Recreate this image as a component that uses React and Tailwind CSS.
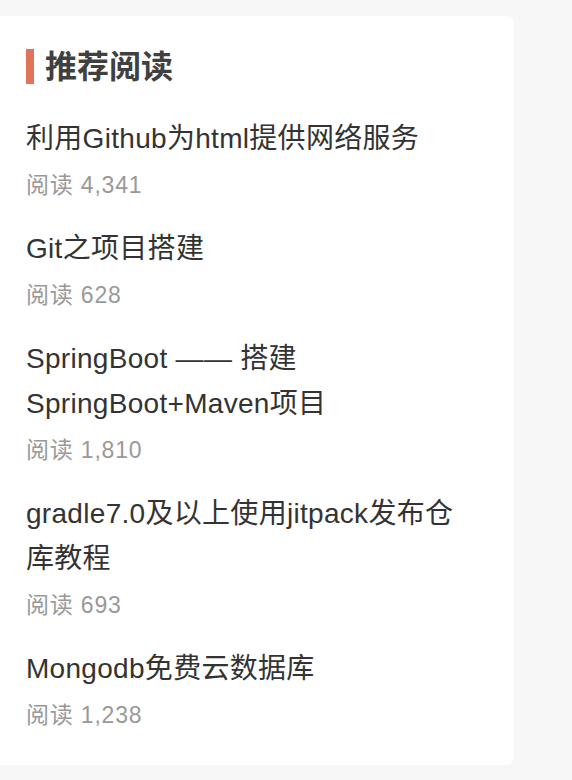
import React from "react";

const articles = [
  { title: "利用Github为html提供网络服务", reads: "4,341" },
  { title: "Git之项目搭建", reads: "628" },
  { title: "SpringBoot —— 搭建 SpringBoot+Maven项目", reads: "1,810" },
  { title: "gradle7.0及以上使用jitpack发布仓库教程", reads: "693" },
  { title: "Mongodb免费云数据库", reads: "1,238" },
];

const fontStack = {
  fontFamily: '"Liberation Sans", "Noto Sans CJK SC", sans-serif',
};

const App = () => {
  return (
    <div className="min-h-[780px] w-[572px] bg-[#f7f7f7] pt-4" style={fontStack}>
      <div className="w-[514px] rounded-r-lg bg-white pt-[33px] pb-[32px] pl-[26px] pr-[40px]">
        <div className="flex h-[35px] items-center">
          <span className="h-[35px] w-2 bg-[#e0735a]" />
          <h2 className="ml-[11px] text-[32px] font-bold leading-none text-[#404040]">
            推荐阅读
          </h2>
        </div>

        <ul className="mt-[32px] flex flex-col gap-[23px]">
          {articles.map((item) => (
            <li key={item.title}>
              <a className="block text-[28px] leading-[45px] tracking-[0.3px] text-[#333]">
                {item.title}
              </a>
              <p className="mt-[7px] text-[23px] leading-[35px] tracking-[0.8px] text-[#999]">
                阅读 {item.reads}
              </p>
            </li>
          ))}
        </ul>
      </div>
    </div>
  );
};

export default App;
